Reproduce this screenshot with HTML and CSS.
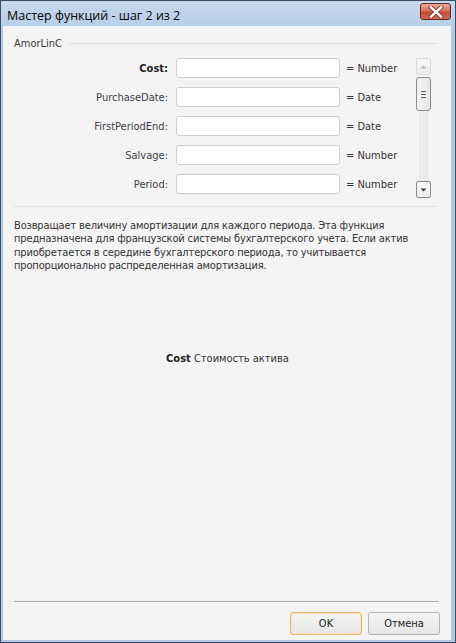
FILE: index.html
```html
<!DOCTYPE html>
<html lang="ru">
<head>
<meta charset="utf-8">
<title>Мастер функций</title>
<link rel="stylesheet" href="styles.css">
</head>
<body>
<div class="window">
  <div class="titlebar">
    <div class="title">Мастер функций - шаг 2 из 2</div>
    <div class="close">
      <svg width="16" height="12" viewBox="0 0 16 12">
        <path d="M3 1.5 L13 10.5 M13 1.5 L3 10.5" stroke="#7a2a22" stroke-width="4.2" stroke-linecap="square"/>
        <path d="M3 1.5 L13 10.5 M13 1.5 L3 10.5" stroke="#f4f4f4" stroke-width="2.6" stroke-linecap="square"/>
      </svg>
    </div>
  </div>
  <div class="client">
    <div class="group-header">
      <span class="group-name">AmorLinC</span>
      <span class="group-line"></span>
    </div>
    <div class="args">
      <div class="arg-grid">
        <div class="label bold">Cost:</div><div class="input"></div><div class="type">= Number</div>
        <div class="label">PurchaseDate:</div><div class="input"></div><div class="type">= Date</div>
        <div class="label">FirstPeriodEnd:</div><div class="input"></div><div class="type">= Date</div>
        <div class="label">Salvage:</div><div class="input"></div><div class="type">= Number</div>
        <div class="label">Period:</div><div class="input"></div><div class="type">= Number</div>
      </div>
      <div class="scrollbar">
        <div class="sb-btn sb-up">
          <svg width="7" height="4" viewBox="0 0 7 4"><path d="M0.5 3.5 L3.5 0.5 L6.5 3.5 Z" fill="#b8b8b8"/></svg>
        </div>
        <div class="sb-thumb">
          <span></span><span></span><span></span>
        </div>
        <div class="sb-track"></div>
        <div class="sb-btn sb-down">
          <svg width="7" height="4" viewBox="0 0 7 4"><path d="M0.5 0.5 L3.5 3.5 L6.5 0.5 Z" fill="#404040"/></svg>
        </div>
      </div>
    </div>
    <div class="sep"></div>
    <div class="desc">Возвращает величину амортизации для каждого периода. Эта функция предназначена для французской системы бухгалтерского учета. Если актив приобретается в середине бухгалтерского периода, то учитывается пропорционально распределенная амортизация.</div>
    <div class="arg-help"><b>Cost</b> Стоимость актива</div>
    <div class="spacer"></div>
    <div class="footer-sep"></div>
    <div class="buttons">
      <div class="btn btn-default">OK</div>
      <div class="btn">Отмена</div>
    </div>
  </div>
</div>
</body>
</html>
```
FILE: styles.css
```css
html, body {
  margin: 0;
  padding: 0;
  width: 456px;
  height: 643px;
  overflow: hidden;
  background: #ffffff;
}
.window {
  box-sizing: border-box;
  width: 456px;
  height: 643px;
  border: 1px solid #3b4d63;
  background: #b3cbe6;
  display: flex;
  flex-direction: column;
}
.titlebar {
  height: 25px;
  flex: none;
  display: flex;
  align-items: center;
  justify-content: space-between;
  background: linear-gradient(#c5d8ee, #b8cfe9);
  padding: 0 4px 0 6px;
}
.title {
  font-family: "Open Sans", sans-serif;
  font-size: 12.5px;
  color: #000000;
  margin-top: 3px;
}
.close {
  width: 31px;
  height: 17px;
  box-sizing: border-box;
  border: 1px solid #5e2a25;
  border-radius: 3px;
  background: linear-gradient(#e9a89b 0%, #d8735f 45%, #c24a33 55%, #cf6a50 100%);
  display: flex;
  align-items: center;
  justify-content: center;
  margin-top: -4px;
}
.client {
  flex: 1;
  margin: 0 4px 2px 2px;
  background: #f4f4f4;
  display: flex;
  flex-direction: column;
  padding: 0 10px 0 11px;
  font-family: "DejaVu Sans Condensed", "DejaVu Sans", sans-serif;
  font-size: 11px;
  color: #333333;
}
.group-header {
  display: flex;
  align-items: center;
  margin-top: 11px;
  height: 12px;
}
.group-name {
  color: #3a3a3a;
}
.group-line {
  flex: 1;
  height: 1px;
  background: #e0e0e0;
  margin-left: 7px;
  margin-right: 3px;
}
.args {
  display: flex;
  margin-top: 9px;
  height: 140px;
}
.arg-grid {
  display: grid;
  grid-template-columns: 154px 164px auto;
  grid-auto-rows: 20px;
  row-gap: 9px;
  column-gap: 8px;
  align-items: center;
  width: 402px;
}
.label {
  text-align: right;
  color: #3c4148;
}
.label.bold {
  font-weight: bold;
  color: #222222;
}
.input {
  height: 20px;
  box-sizing: border-box;
  border: 1px solid #cfcfcf;
  border-radius: 3px;
  background: #ffffff;
}
.type {
  color: #333333;
  margin-left: -2px;
}
.scrollbar {
  width: 15px;
  display: flex;
  flex-direction: column;
  align-items: center;
}
.sb-btn {
  width: 15px;
  height: 17px;
  box-sizing: border-box;
  border-radius: 2px;
  display: flex;
  align-items: center;
  justify-content: center;
  flex: none;
}
.sb-up {
  border: 1px solid #dadada;
  background: linear-gradient(#f7f7f7, #ececec);
}
.sb-down {
  border: 1px solid #8a8a8a;
  background: linear-gradient(#fbfbfb, #ececec);
}
.sb-thumb {
  width: 15px;
  height: 34px;
  box-sizing: border-box;
  border: 1px solid #8c8c8c;
  border-radius: 3px;
  background: linear-gradient(90deg, #f3f3f3, #e9e9e9);
  margin-top: 2px;
  display: flex;
  flex-direction: column;
  align-items: center;
  justify-content: center;
  gap: 2px;
  flex: none;
}
.sb-thumb span {
  width: 5px;
  height: 1px;
  background: #606060;
}
.sb-track {
  flex: 1;
  width: 7px;
  background: #ececec;
  border-left: 1px solid #e2e2e2;
  border-right: 1px solid #e2e2e2;
}
.sep {
  height: 1px;
  background: #e2e2e2;
  margin-top: 8px;
  margin-right: 3px;
}
.desc {
  margin-top: 12px;
  line-height: 13.4px;
  letter-spacing: -0.15px;
  color: #333333;
  width: 420px;
}
.arg-help {
  margin-top: 79px;
  text-align: center;
  color: #333333;
}
.arg-help b {
  color: #222222;
}
.spacer {
  flex: 1;
}
.footer-sep {
  height: 1px;
  background: #a5a5a5;
  margin-right: 3px;
}
.buttons {
  display: flex;
  justify-content: flex-end;
  gap: 6px;
  margin-top: 10px;
  margin-bottom: 5px;
  margin-right: 1px;
}
.btn {
  width: 72px;
  height: 23px;
  box-sizing: border-box;
  border: 1px solid #b4b4b4;
  border-radius: 3px;
  background: linear-gradient(#f4f4f4, #e6e6e6);
  display: flex;
  align-items: center;
  justify-content: center;
  color: #222222;
}
.btn-default {
  border-color: #eab46a;
  box-shadow: inset 0 0 0 1px #fbe3bd;
}
```
